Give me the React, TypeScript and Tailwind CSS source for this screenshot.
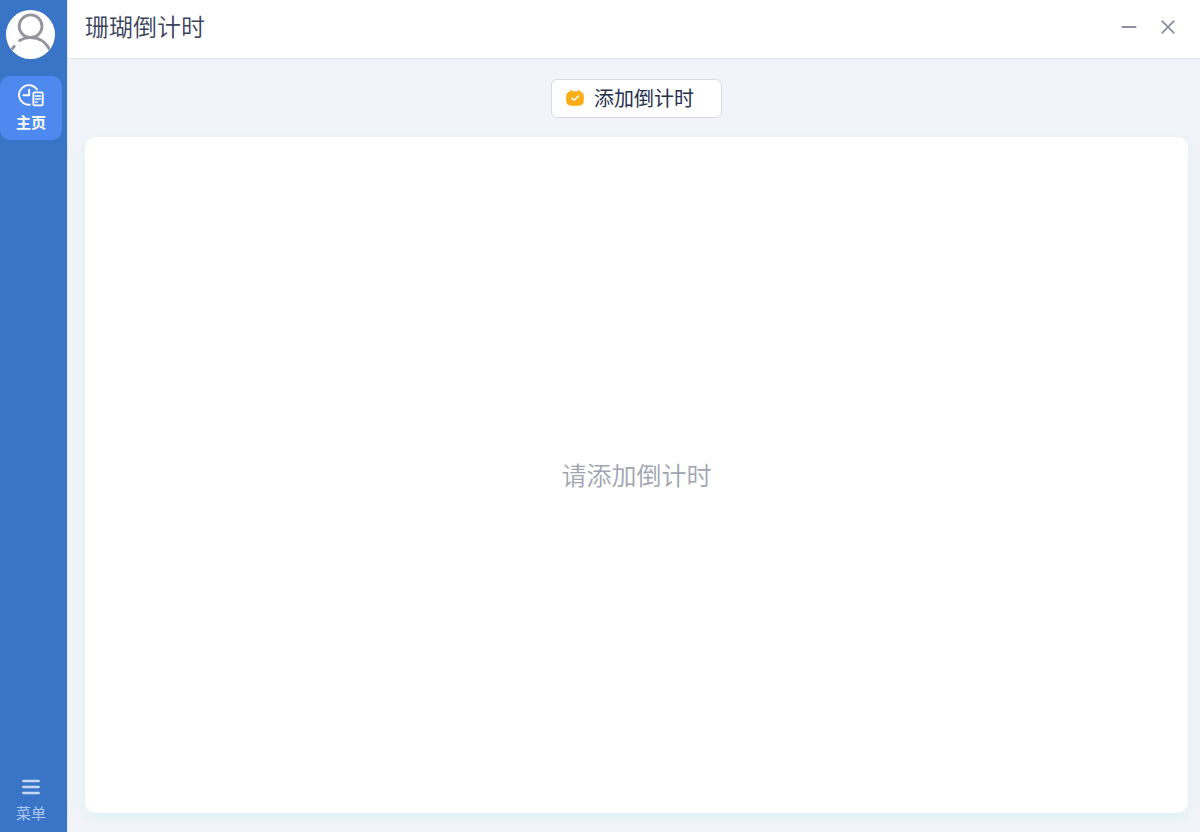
import React from "react";

function AvatarIcon() {
  return (
    <svg viewBox="0 0 49 49" className="size-full" fill="none" stroke="#95939b" aria-hidden="true">
      <circle cx="24.6" cy="16.2" r="11.4" strokeWidth="2.8" />
      <path d="M12.6 31.2C16 28.8 20 27.6 24.6 27.6C33 27.6 39.5 31.5 43.6 39.5" strokeWidth="2.8" />
      <path d="M5.5 39.5L9 35.5" strokeWidth="2.8" />
    </svg>
  );
}

function HomeIcon() {
  return (
    <svg viewBox="0 0 26 24" className="h-6 w-[26px]" fill="none" stroke="currentColor" strokeWidth="1.9" strokeLinecap="round" strokeLinejoin="round" aria-hidden="true">
      <path d="M11.8 20.7A9.8 9.8 0 1 1 18.9 5.4" />
      <path d="M11.2 5.8V11.3H5.4" />
      <rect x="15.4" y="8.4" width="9.3" height="13" rx="1.2" />
      <path d="M17.6 12.1H22.4M17.6 15H22.4M17.6 18H19.2" strokeWidth="1.5" />
    </svg>
  );
}

function MenuIcon() {
  return (
    <svg viewBox="0 0 18 16" className="h-4 w-[18px]" stroke="currentColor" strokeWidth="2.6" strokeLinecap="round" aria-hidden="true">
      <path d="M1.4 2H16.6M1.4 8H16.6M1.4 14H16.6" />
    </svg>
  );
}

function CalendarCheckIcon() {
  return (
    <svg viewBox="0 0 18 18" className="size-[18px]" aria-hidden="true">
      <path
        d="M4.6 2.4V1.9Q4.6 1.1 5.2 1.1T5.9 1.9V2.5H12.1V1.9Q12.1 1.1 12.8 1.1T13.4 1.9V2.4Q17.5 3.1 17.5 7V11.4Q17.5 16.4 12.4 16.4H5.6Q.5 16.4 .5 11.4V7Q.5 3.1 4.6 2.4Z"
        fill="#fbad18"
        stroke="#fbad18"
        strokeWidth=".6"
      />
      <path d="M5.7 9L8.1 11.2L12.3 7.1" fill="none" stroke="white" strokeWidth="1.5" strokeLinecap="round" strokeLinejoin="round" />
    </svg>
  );
}

function Sidebar() {
  return (
    <nav className="flex w-[68px] shrink-0 flex-col border-r border-[#dce9fa] bg-[#3974c6] pt-2.5 pb-[9px]">
      <button type="button" aria-label="用户" className="ml-1.5 size-[49px] overflow-hidden rounded-full bg-white">
        <AvatarIcon />
      </button>
      <button
        type="button"
        className="mt-[17px] flex h-16 w-[62px] flex-col items-center gap-0.5 rounded-[10px] bg-[#4d89ef] pt-2 text-[15px] leading-6 font-bold text-white"
      >
        <HomeIcon />
        主页
      </button>
      <button type="button" className="mt-auto flex w-[62px] flex-col items-center gap-2 text-[15px] leading-5 text-[#a9c7ef]">
        <span className="text-[#c5d9f3]">
          <MenuIcon />
        </span>
        菜单
      </button>
    </nav>
  );
}

function TitleBar() {
  return (
    <header className="flex h-[59px] items-center justify-between border-b border-[#e1e3e9] bg-white pr-6 pb-1 pl-[17px]">
      <h1 className="pb-0.5 text-2xl font-[350] text-[#3a435c]">珊瑚倒计时</h1>
      <div className="flex items-center gap-[23px] text-[#8b90a3]">
        <button type="button" aria-label="最小化">
          <svg viewBox="0 0 16 16" className="size-4" stroke="currentColor" strokeWidth="2.2" strokeLinecap="round">
            <path d="M1.5 8H14.5" />
          </svg>
        </button>
        <button type="button" aria-label="关闭">
          <svg viewBox="0 0 16 16" className="size-4" stroke="currentColor" strokeWidth="1.9" strokeLinecap="round">
            <path d="M2.2 2.2L13.8 13.8M13.8 2.2L2.2 13.8" />
          </svg>
        </button>
      </div>
    </header>
  );
}

export default function App() {
  return (
    <div className="flex min-h-screen bg-[#f2f4f9] font-['Noto_Sans_CJK_SC',sans-serif]">
      <Sidebar />
      <div className="flex min-w-0 flex-1 flex-col">
        <TitleBar />
        <main className="flex flex-1 flex-col items-center pt-5 pr-3 pb-[19px] pl-[17px]">
          <button
            type="button"
            className="flex h-[39px] w-[171px] items-center gap-2.5 rounded-md border border-[#d9dae3] bg-white pb-0.5 pl-3.5 text-xl leading-none text-[#25304c]"
          >
            <CalendarCheckIcon />
            添加倒计时
          </button>
          <section className="mt-[19px] flex w-full flex-1 items-center justify-center rounded-[10px] bg-white pb-0.5 shadow-[0_4px_16px_#dcf1f6]">
            <p className="text-[25px] leading-9 font-[350] text-[#9ea4b0]">请添加倒计时</p>
          </section>
        </main>
      </div>
    </div>
  );
}
